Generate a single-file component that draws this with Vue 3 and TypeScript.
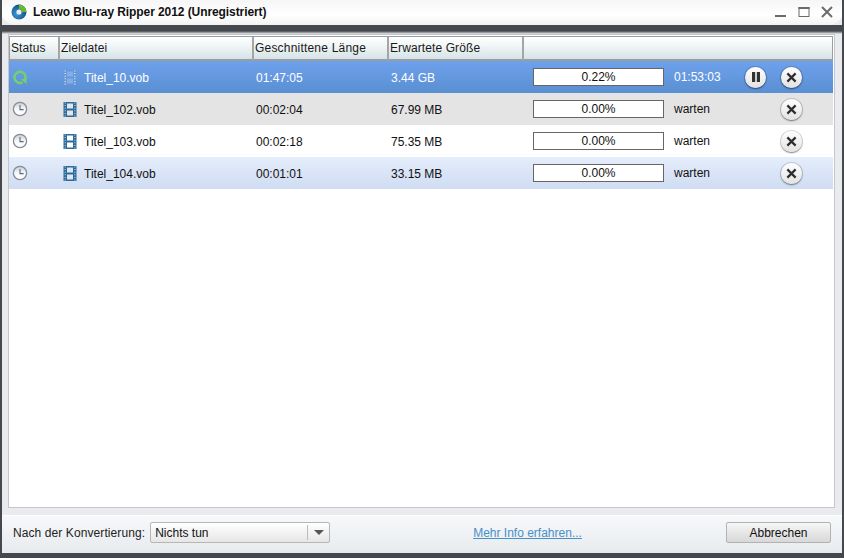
<script setup lang="ts">
interface Row { name: string; len: string; size: string; pct: string; state: string; kind: string; active?: boolean }
const rows: Row[] = [
  { name: 'Titel_10.vob', len: '01:47:05', size: '3.44 GB', pct: '0.22%', state: '01:53:03', kind: 'active', active: true },
  { name: 'Titel_102.vob', len: '00:02:04', size: '67.99 MB', pct: '0.00%', state: 'warten', kind: 'gray' },
  { name: 'Titel_103.vob', len: '00:02:18', size: '75.35 MB', pct: '0.00%', state: 'warten', kind: 'white' },
  { name: 'Titel_104.vob', len: '00:01:01', size: '33.15 MB', pct: '0.00%', state: 'warten', kind: 'blue' },
]
function frameFill(r: Row): string {
  if (r.active) return '#83aee6'
  if (r.kind === 'gray') return '#e4e4e4'
  if (r.kind === 'white') return '#ffffff'
  return '#dce6f6'
}
</script>

<template>
  <div class="win">
    <header class="title">
      <svg class="logo" width="16" height="16" viewBox="0 0 16 16">
        <defs>
          <radialGradient id="lg" cx="35%" cy="65%" r="70%">
            <stop offset="0" stop-color="#3d94d4" />
            <stop offset="1" stop-color="#0e4f86" />
          </radialGradient>
        </defs>
        <circle cx="8" cy="8" r="7.5" fill="url(#lg)" />
        <path d="M8 .5A7.5 7.5 0 0 1 15.5 8H11A3 3 0 0 0 8 5Z" fill="#6cb82e" />
        <circle cx="8" cy="8" r="2.6" fill="#e8eef2" />
      </svg>
      <span class="title-text">Leawo Blu-ray Ripper 2012 (Unregistriert)</span>
      <div class="win-btns">
        <svg width="12" height="12" viewBox="0 0 12 12"><rect x="0" y="9" width="11" height="2" fill="#6b6b6b" /></svg>
        <svg width="12" height="12" viewBox="0 0 12 12"><rect x="1" y="1.5" width="10" height="9" fill="none" stroke="#6b6b6b" /><rect x="0.5" y="1" width="11" height="2" fill="#6b6b6b" /></svg>
        <svg width="12" height="12" viewBox="0 0 12 12"><path d="M1 1l10 10M11 1 1 11" stroke="#6b6b6b" stroke-width="2" /></svg>
      </div>
    </header>
    <div class="gap"></div>
    <main class="panel">
      <div class="grid head">
        <div class="th">Status</div>
        <div class="th">Zieldatei</div>
        <div class="th">Geschnittene Länge</div>
        <div class="th">Erwartete Größe</div>
        <div class="th last"></div>
      </div>
      <div v-for="r in rows" :key="r.name" class="grid row" :class="r.kind">
        <div class="cell status">
          <svg v-if="r.active" width="16" height="16" viewBox="0 0 16 16">
            <path d="M10.5 13.4A5.6 5.6 0 1 1 13.6 8a5.6 5.6 0 0 1-.9 3" fill="none" stroke="#74d06c" stroke-width="2.6" />
            <path d="M8.5 10h6v5Z" fill="#74d06c" />
          </svg>
          <svg v-else width="16" height="16" viewBox="0 0 16 16">
            <defs>
              <linearGradient id="cl" x1="0" y1="0" x2="0" y2="1">
                <stop offset="0" stop-color="#c9ced6" />
                <stop offset="0.5" stop-color="#f6f8fb" />
                <stop offset="1" stop-color="#ffffff" />
              </linearGradient>
            </defs>
            <circle cx="8" cy="8" r="6.6" fill="url(#cl)" stroke="#868d97" stroke-width="1.3" />
            <path d="M8 4v4.6h3.6" fill="none" stroke="#5a6a7c" stroke-width="1.1" />
          </svg>
        </div>
        <div class="cell name">
          <svg class="film" width="14" height="16" viewBox="0 0 14 16">
            <rect x="0.5" y="1" width="13" height="15" :fill="r.active ? '#6497da' : '#2b6a9b'" />
            <rect x="4" y="2.5" width="6" height="5" :fill="frameFill(r)" />
            <rect x="4" y="9.5" width="6" height="5" :fill="frameFill(r)" />
            <path d="M2.2 1.5v14M11.8 1.5v14" :stroke="r.active ? '#e4eefa' : '#b7d2e6'" stroke-width="1.2" stroke-dasharray="1 1.6" />
          </svg>
          <span>{{ r.name }}</span>
        </div>
        <div class="cell len">{{ r.len }}</div>
        <div class="cell size">{{ r.size }}</div>
        <div class="cell prog">
          <div class="bar">{{ r.pct }}</div>
          <span class="state">{{ r.state }}</span>
          <span class="round" :class="{ hidden: !r.active }">
            <svg width="10" height="10" viewBox="0 0 10 10"><rect x="1" y="0" width="3.2" height="10" fill="#333" /><rect x="5.8" y="0" width="3.2" height="10" fill="#333" /></svg>
          </span>
          <span class="round">
            <svg width="11" height="11" viewBox="0 0 12 12"><path d="M1.5 1.5l9 9M10.5 1.5l-9 9" stroke="#2e2e2e" stroke-width="2.4" /></svg>
          </span>
        </div>
      </div>
    </main>
    <footer class="foot">
      <span class="lbl">Nach der Konvertierung:</span>
      <div class="select">
        <span class="sel-text">Nichts tun</span>
        <span class="arrow"><i></i></span>
      </div>
      <a class="link">Mehr Info erfahren...</a>
      <button class="btn">Abbrechen</button>
    </footer>
  </div>
</template>

<style>
html, body { margin: 0; background: #3c3f44; }
</style>

<style scoped>
.win {
  width: 844px; height: 558px; box-sizing: border-box;
  display: flex; flex-direction: column;
  font-family: "Liberation Sans", Arial, sans-serif; font-size: 12px; color: #111;
  background: #e9ebee; border: solid #45484d; border-width: 0 2px 5px 2px; overflow: hidden;
}
.title {
  height: 25px; flex: none; margin: 0 -2px; display: flex; align-items: center; box-sizing: border-box;
  padding: 0 11px 2px 11px;
  background: linear-gradient(#f6f6f6, #fff 60%, #f2f2f2);
  border-radius: 0 0 16px 16px;
}
.logo { margin-right: 6px; }
.title-text { font-weight: 700; font-size: 12px; letter-spacing: -0.08px; color: #111; }
.win-btns { margin-left: auto; display: flex; gap: 11px; }
.gap { flex: none; height: 9px; background: linear-gradient(#45484d 0, #45484d 6px, #e9ebee 9px); margin: 0 -2px; }
.panel {
  flex: none; height: 474px; margin: 0 7px 0 6px; box-sizing: border-box;
  background: #fff; border: 1px solid #c4c8cc; padding: 1px 1px 0 0;
}
.grid { display: grid; grid-template-columns: 50px 194px 135px 135px 1fr; }
.head { height: 25px; background: linear-gradient(#fff, #f3f7f7 35%, #d5e3e6); border: solid #9a9da0; border-width: 1px 1px 2px; box-sizing: border-box; }
.th { border-right: 2px solid #a3a6a8; padding-left: 1px; line-height: 23px; font-size: 12px; color: #1a1a1a; letter-spacing: 0.1px; }
.th:nth-child(3) { letter-spacing: 0.2px; }
.th.last { border-right: 0; }
.row { height: 32px; color: #111; }
.row.active { background: linear-gradient(#6ea1ec, #5a8fd2); color: #fff; }
.row.gray { background: #e4e4e4; }
.row.white { background: #fff; }
.row.blue { background: linear-gradient(#e4edfb, #cfdcf2); }
.cell { display: flex; align-items: center; min-width: 0; }
.status { padding-left: 3px; }
.name { padding-left: 4px; gap: 7px; }
.name span, .len, .size { padding-top: 1px; }
.film { flex: none; }
.len { padding-left: 3px; }
.size { padding-left: 3px; }
.prog { padding-left: 10px; }
.bar {
  width: 131px; height: 18px; box-sizing: border-box; background: #fff; border: 1px solid #666;
  text-align: center; line-height: 16px; color: #111; flex: none;
}
.state { width: 71px; margin-left: 10px; flex: none; }
.round {
  width: 21px; height: 21px; border-radius: 50%; flex: none; display: flex; align-items: center; justify-content: center;
  background: linear-gradient(#fff, #e2e2e2); box-shadow: 0 0 0 1px rgba(0, 0, 0, .14), 0 1px 2px rgba(0, 0, 0, .4); margin-right: 15px;
}
.round.hidden { visibility: hidden; }
.foot {
  flex: 1; display: flex; align-items: center; padding: 0 11px 4px 11px;
  background: linear-gradient(#f6f8fa, #e8ebee);
  margin-top: 7px; border-top: 1px solid #fff;
}
.lbl { color: #222; margin-right: 5px; letter-spacing: 0.09px; }
.select {
  width: 180px; height: 21px; box-sizing: border-box; display: flex; align-items: center;
  border: 1px solid #b4b6b8; border-radius: 2px; background: linear-gradient(#fff, #e6e6e6);
}
.sel-text { flex: 1; padding-left: 4px; }
.arrow { width: 21px; height: 15px; border-left: 1px solid #bbb; display: flex; align-items: center; justify-content: center; }
.arrow i { width: 0; height: 0; border: 5px solid transparent; border-top: 5px solid #555; border-bottom: 0; }
.link { margin-left: 143px; color: #4a90c8; text-decoration: underline; }
.btn {
  margin-left: auto; width: 105px; height: 21px; padding: 0;
  font: 12px "Liberation Sans", Arial, sans-serif; color: #111;
  border: 1px solid #b0b2b4; border-radius: 2px; background: linear-gradient(#f6f6f6, #d8d8d8);
}
</style>
